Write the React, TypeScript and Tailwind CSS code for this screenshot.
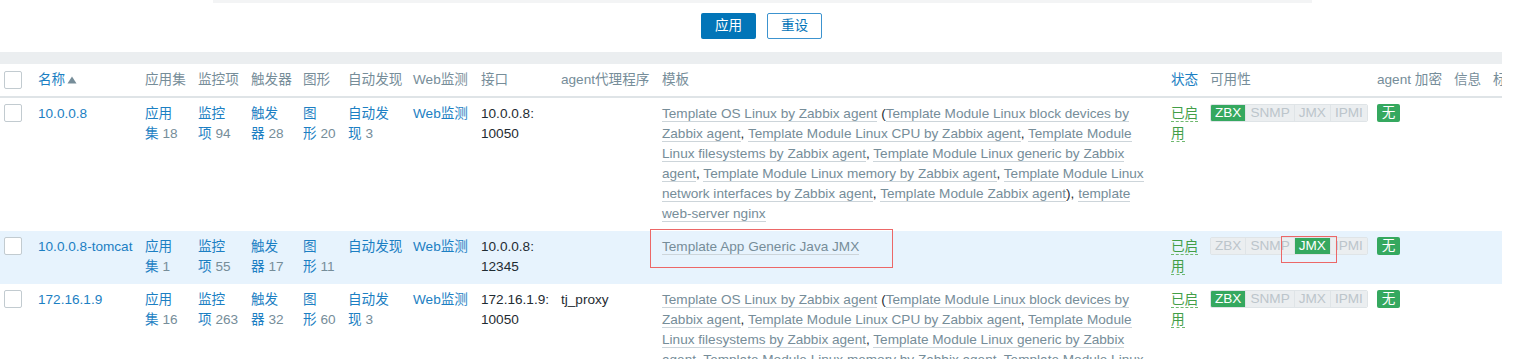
import React from "react";

const cols =
  "grid grid-cols-[38px_107px_53px_53px_52px_45px_65px_68px_80px_101px_509px_39px_167px_77px_39px_80px]";

function Cnt({ top, bottom, n }: { top: string; bottom?: string; n?: string }) {
  return (
    <div>
      <div className="text-[#1c7fc3]">{top}</div>
      {bottom && (
        <div>
          <span className="text-[#1c7fc3]">{bottom}</span>
          {n && <span className="text-[#768d99]"> {n}</span>}
        </div>
      )}
    </div>
  );
}

function T({ children }: { children: React.ReactNode }) {
  return <span className="text-[#768d99] border-b border-[#cdd5da]">{children}</span>;
}

function Checkbox() {
  return <div className="w-[18px] h-[18px] ml-[4px] border border-[#c2cbd0] rounded-[2px] bg-white" />;
}

function Status() {
  return (
    <div className="text-[#429e47]">
      <div><span className="border-b border-dashed border-[#6fb86f]">已启</span></div>
      <div><span className="border-b border-dashed border-[#6fb86f]">用</span></div>
    </div>
  );
}

function Avail({ on }: { on: string }) {
  const items = ["ZBX", "SNMP", "JMX", "IPMI"];
  return (
    <div className="flex h-[18px] w-fit border border-[#dfe4e7] rounded-[2px] overflow-hidden leading-[16px]">
      {items.map((it, i) => (
        <span
          key={it}
          className={`px-[4px] ${i > 0 ? "border-l border-[#dfe4e7]" : ""} ${
            it === on ? "bg-[#35a85f] text-white" : "bg-[#ebeef0] text-[#bcc5cb]"
          }`}
        >
          {it}
        </span>
      ))}
    </div>
  );
}

function Enc() {
  return (
    <div className="w-[23px] h-[18px] rounded-[2px] bg-[#35a85f] text-white leading-[18px] text-center">无</div>
  );
}

function LinuxTemplates() {
  return (
    <>
      <T>Template OS Linux by Zabbix agent</T> (<T>Template Module Linux block devices by Zabbix agent</T>,{" "}
      <T>Template Module Linux CPU by Zabbix agent</T>, <T>Template Module Linux filesystems by Zabbix agent</T>,{" "}
      <T>Template Module Linux generic by Zabbix agent</T>, <T>Template Module Linux memory by Zabbix agent</T>,{" "}
      <T>Template Module Linux network interfaces by Zabbix agent</T>, <T>Template Module Zabbix agent</T>),{" "}
      <T>template web-server nginx</T>
    </>
  );
}

type Host = {
  name: string;
  apps: string;
  items: string;
  triggers: string;
  graphs: string;
  disc?: string;
  ip: string;
  port: string;
  proxy: string;
  templates: React.ReactNode;
  avail: string;
  selected?: boolean;
};

const hosts: Host[] = [
  { name: "10.0.0.8", apps: "18", items: "94", triggers: "28", graphs: "20", disc: "3", ip: "10.0.0.8:", port: "10050", proxy: "", templates: <LinuxTemplates />, avail: "ZBX" },
  { name: "10.0.0.8-tomcat", apps: "1", items: "55", triggers: "17", graphs: "11", ip: "10.0.0.8:", port: "12345", proxy: "", templates: <T>Template App Generic Java JMX</T>, avail: "JMX", selected: true },
  { name: "172.16.1.9", apps: "16", items: "263", triggers: "32", graphs: "60", disc: "3", ip: "172.16.1.9:", port: "10050", proxy: "tj_proxy", templates: <LinuxTemplates />, avail: "ZBX" },
];

export default function App() {
  return (
    <div
      className="relative w-[1523px] h-[359px] overflow-hidden bg-white text-[13.6px] leading-[20px] text-[#1f2c33]"
      style={{ fontFamily: '"Liberation Sans", "Noto Sans CJK SC", sans-serif' }}
    >
      <div className="ml-[213px] w-[1099px] h-[3px] bg-[#f3f4f5]" />
      <div className="flex justify-center gap-[11px] mt-[10px]">
        <button className="w-[55px] h-[26px] rounded-[2px] bg-[#0275b8] text-white">应用</button>
        <button className="w-[55px] h-[26px] rounded-[2px] border border-[#3c93cf] bg-white text-[#0275b8]">重设</button>
      </div>
      <div className="w-[1502px] overflow-hidden mt-[13px]">
        <div className="h-[12px] bg-[#ebeef0]" />
        <div className={`${cols} h-[34px] items-center border-b-2 border-[#dfe4e7] whitespace-nowrap text-[#768d99]`}>
          <Checkbox />
          <div className="flex items-center text-[#1c7fc3]">
            名称
            <svg width="10" height="8" viewBox="0 0 10 8" className="ml-[2px]">
              <path d="M0.5 7.5 L5 0.5 L9.5 7.5 Z" fill="#768d99" />
            </svg>
          </div>
          <div>应用集</div>
          <div>监控项</div>
          <div>触发器</div>
          <div>图形</div>
          <div>自动发现</div>
          <div>Web监测</div>
          <div>接口</div>
          <div>agent代理程序</div>
          <div>模板</div>
          <div className="text-[#1c7fc3]">状态</div>
          <div>可用性</div>
          <div>agent 加密</div>
          <div>信息</div>
          <div>标记</div>
        </div>
        {hosts.map((h) => (
          <div key={h.name} className={`${cols} items-start pt-[6px] pb-[7px] ${h.selected ? "bg-[#e7f3fd]" : "bg-white"}`}>
            <Checkbox />
            <div className="text-[#1c7fc3] whitespace-nowrap">{h.name}</div>
            <Cnt top="应用" bottom="集" n={h.apps} />
            <Cnt top="监控" bottom="项" n={h.items} />
            <Cnt top="触发" bottom="器" n={h.triggers} />
            <Cnt top="图" bottom="形" n={h.graphs} />
            {h.disc ? <Cnt top="自动发" bottom="现" n={h.disc} /> : <div className="text-[#1c7fc3] whitespace-nowrap">自动发现</div>}
            <div className="text-[#1c7fc3]">Web监测</div>
            <div>
              <div>{h.ip}</div>
              <div>{h.port}</div>
            </div>
            <div>{h.proxy}</div>
            <div className="pr-[14px]">{h.templates}</div>
            <Status />
            <Avail on={h.avail} />
            <Enc />
            <div />
            <div />
          </div>
        ))}
      </div>
      <div className="absolute left-[650px] top-[229px] w-[243px] h-[39px] border border-[#ec6767]" />
      <div className="absolute left-[1281px] top-[236px] w-[56px] h-[27px] border border-[#ec6767]" />
    </div>
  );
}
